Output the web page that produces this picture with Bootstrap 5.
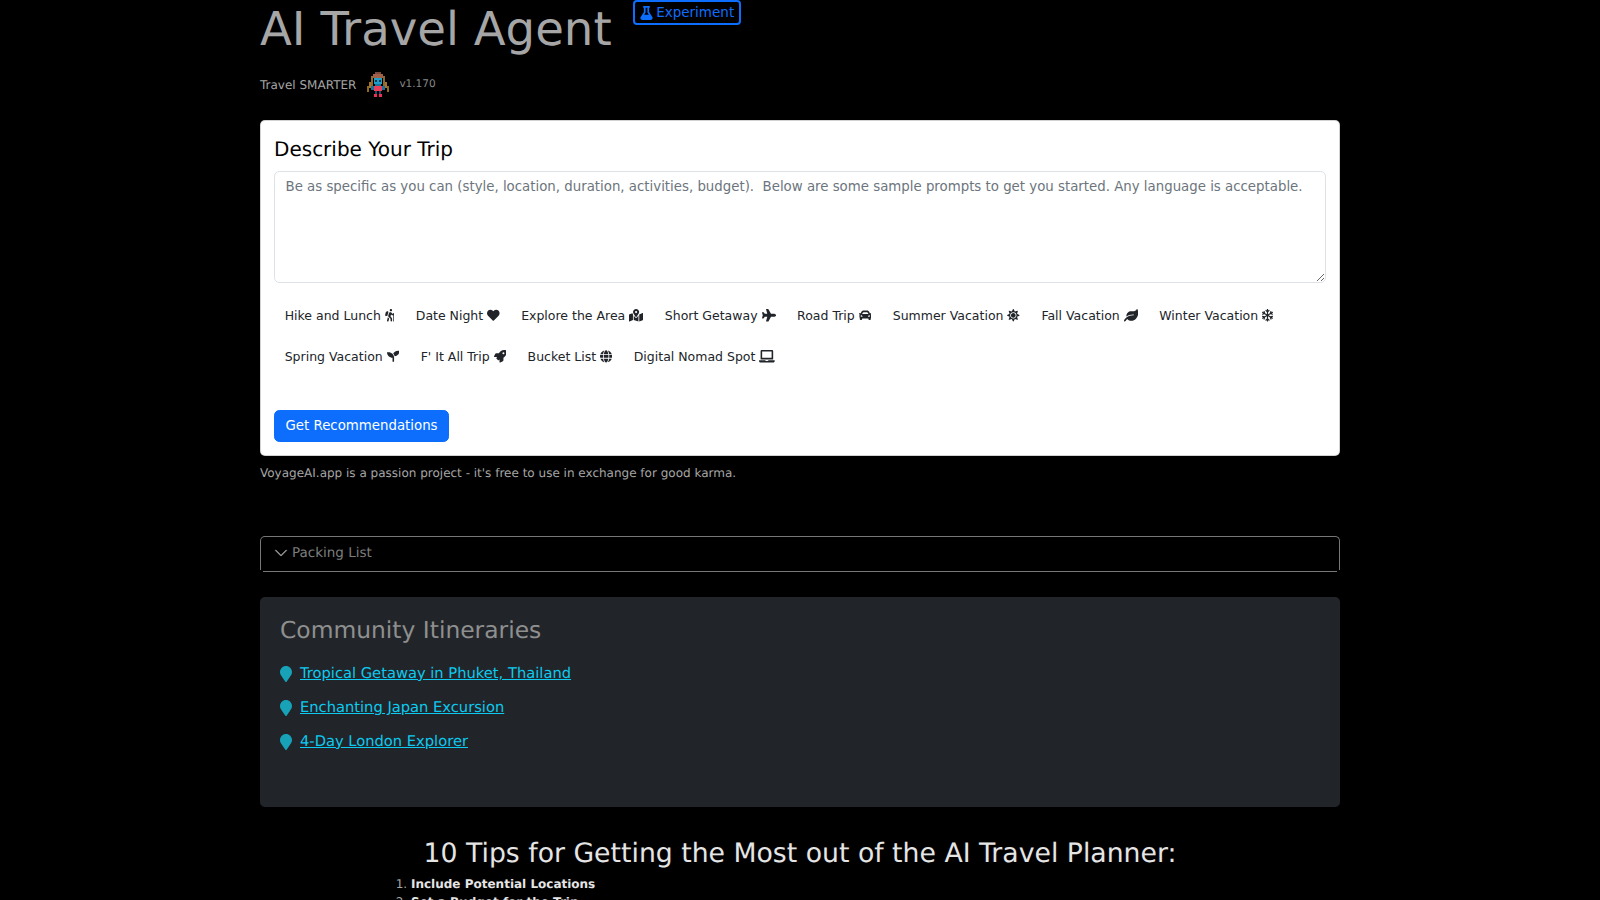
<!DOCTYPE html>
<html lang="en">
<head>
    <meta charset="UTF-8">
    <title>AI Travel Agent</title>
    <link href="https://cdn.jsdelivr.net/npm/bootstrap@5.3.3/dist/css/bootstrap.min.css" rel="stylesheet">
    <style>
        html { font-size: 14px; }
        body { background: #000; color: #adb5bd; font-family: "DejaVu Sans", sans-serif; height: 900px; overflow: hidden; text-rendering: geometricPrecision; }
        .page-wrap { width: 1080px; margin: 0 auto; }
        .app-title { font-size: 46.6px; font-weight: 400; color: #a6a6a6; line-height: 58px; margin: 0; }
        .exp-btn { font-size: 13.5px; color: #0d6efd; border: 2px solid #0d6efd; border-radius: 4px; padding: 0 5px; line-height: 21px; margin-left: 21px; align-self: flex-start; background: none; }
        .exp-btn svg { height: 14px; width: 13px; fill: currentColor; }
        .tagline { font-size: 12px; margin-top: 13px; height: 27px; color: #a6a6a6; }
        .version { font-size: 10.5px; color: #888; }
        .avatar-mark { margin: 0 10px 0 11px; }
        .trip-card { margin-top: 22px; padding: 14px 13px 13px; border-radius: 5px; }
        .trip-card h5 { font-size: 20px; font-weight: 400; color: #000; margin-bottom: 8px; line-height: 27px; margin-top: 1px; }
        .trip-input { height: 112px; font-size: 13.33px; color: #212529; }
        .trip-input::placeholder { color: #6c757d; }
        .prompt-row { margin-top: 14px; row-gap: 3px; min-height: 91px; }
        .prompt-btn { font-size: 12.5px; color: #212529; border: 0; background: none; padding: 9px 10.7px; line-height: 20px; white-space: nowrap; }
        .prompt-btn svg { height: 12.6px; fill: currentColor; vertical-align: -2px; }
        .go-btn { margin-top: 22px; font-size: 13.33px; padding: 5px 10.5px; }
        .footnote { font-size: 12px; color: #a6a6a6; margin: 8px 0 0; }
        .pack-box { margin-top: 54px; height: 34px; border: 1px solid #777; border-bottom: 0; border-radius: 5px 5px 0 0; background: #000; color: #7d7d7d; padding: 0 13px; font-size: 13.5px; }
        .pack-box svg { width: 14px; height: 14px; fill: #9a9a9a; margin-right: 4px; }
        .pack-rule { height: 1px; margin: 1px 3px 0; background: #777; }
        .community { margin-top: 25px; height: 210px; background: #212529; border-radius: 5px; padding: 19px 20px; }
        .community h3 { font-size: 23.4px; color: #8f8f8f; font-weight: 400; margin-bottom: 13px; line-height: 28px; }
        .spot { height: 34px; font-size: 14.7px; }
        .spot svg { width: 12px; height: 16px; fill: #17a2b8; margin-right: 8px; flex: none; }
        .spot a { color: #0dcaf0; }
        .tips-title { font-size: 26.7px; font-weight: 400; color: #e5e5e5; text-align: center; margin: 31px 0 0; }
        .tips-list { width: 810px; margin: 5px auto 0; padding-left: 16px; font-size: 12px; color: #e5e5e5; }
        .tips-list li::marker { color: #a6a6a6; font-weight: 400; }
        .tips-list li { font-weight: 700; }
    </style>
</head>
<body>
<div class="page-wrap">
    <!-- Header -->
    <div class="d-flex">
        <h1 class="app-title">AI Travel Agent</h1>
        <button class="exp-btn d-flex align-items-center gap-1">
            <svg viewBox="0 0 448 512"><path d="M437.200 403.500L320 215V64h8c13.300 0 24-10.700 24-24V24c0-13.300-10.700-24-24-24H120c-13.300 0-24 10.700-24 24v16c0 13.300 10.700 24 24 24h8v151L10.800 403.500C-18.500 450.600 15.300 512 70.900 512h306.200c55.700 0 89.400-61.500 60.100-108.500zM137.900 320l48.200-77.600c3.700-5.200 5.800-11.600 5.800-18.400V64h64v160c0 6.900 2.200 13.200 5.800 18.400l48.200 77.600h-172z"/></svg>
            Experiment
        </button>
    </div>
    <div class="tagline d-flex align-items-center">
        <span>Travel SMARTER</span>
        <svg class="avatar-mark" width="22" height="26" viewBox="0 0 22 26">
            <rect x="8" y="0" width="6" height="2" fill="#7a4a3c"/>
            <rect x="6" y="2" width="10" height="4" fill="#a0604a"/>
            <rect x="4" y="4" width="2" height="10" fill="#8a6a30"/>
            <rect x="16" y="4" width="2" height="10" fill="#8a6a30"/>
            <rect x="2" y="10" width="2" height="6" fill="#a8742c"/>
            <rect x="18" y="10" width="2" height="6" fill="#a8742c"/>
            <rect x="0" y="14" width="2" height="6" fill="#8a6a20"/>
            <rect x="20" y="14" width="2" height="6" fill="#8a6a20"/>
            <rect x="7" y="6" width="8" height="6" fill="#1f9ec9"/>
            <rect x="8" y="8" width="2" height="2" fill="#0a3a50"/>
            <rect x="12" y="8" width="2" height="2" fill="#0a3a50"/>
            <rect x="8" y="12" width="6" height="2" fill="#16739a"/>
            <rect x="7" y="14" width="8" height="5" fill="#e8405a"/>
            <rect x="4" y="14" width="3" height="4" fill="#1f6f9c"/>
            <rect x="15" y="14" width="3" height="4" fill="#1f6f9c"/>
            <rect x="8" y="19" width="2" height="3" fill="#234a6a"/>
            <rect x="12" y="19" width="2" height="3" fill="#234a6a"/>
            <rect x="7" y="22" width="3" height="3" fill="#e8305a"/>
            <rect x="12" y="22" width="3" height="3" fill="#e8305a"/>
        </svg>
        <span class="version">v1.170</span>
    </div>

    <!-- Trip form -->
    <div class="card trip-card">
        <h5>Describe Your Trip</h5>
        <textarea class="form-control trip-input" placeholder="Be as specific as you can (style, location, duration, activities, budget).  Below are some sample prompts to get you started. Any language is acceptable."></textarea>
        <div class="d-flex flex-wrap prompt-row align-content-start">
            <button class="prompt-btn">Hike and Lunch <svg width="9.500" viewBox="0 0 384 512"><path d="M80.950 472.230c-4.280 17.160 6.140 34.530 23.280 38.810 2.610.66 5.220.95 7.800.95 14.330 0 27.370-9.700 31.020-24.230l25.240-100.970-52.780-52.780-34.560 138.220zm14.890-196.120L137 117c2.190-8.420-3.140-16.950-11.920-19.060-43.880-10.520-88.350 15.070-99.320 57.170L.49 253.240c-2.190 8.420 3.140 16.950 11.920 19.060l63.560 15.250c8.790 2.100 17.680-3.020 19.870-11.440zM368 160h-16c-8.840 0-16 7.160-16 16v16h-34.750l-46.780-46.780C243.380 134.110 228.610 128 212.910 128c-27.020 0-50.470 18.300-57.030 44.520l-26.920 107.720a32.012 32.012 0 0 0 8.420 30.390L224 397.250V480c0 17.670 14.330 32 32 32s32-14.330 32-32v-82.750c0-17.090-6.660-33.160-18.750-45.250l-46.820-46.820c.15-.5.49-.89.62-1.410l19.890-79.570 22.430 22.430c6.050 6.050 14.080 9.380 22.620 9.380h48v240c0 8.840 7.160 16 16 16h16c8.840 0 16-7.160 16-16V176c.01-8.840-7.150-16-16-16zM240 96c26.510 0 48-21.490 48-48S266.510 0 240 0s-48 21.490-48 48 21.490 48 48 48z"/></svg></button>
            <button class="prompt-btn">Date Night <svg width="12.600" viewBox="0 0 512 512"><path d="M462.300 62.600C407.500 15.900 326 24.300 275.700 76.200L256 96.500l-19.700-20.300C186.100 24.300 104.500 15.900 49.700 62.600c-62.800 53.600-66.100 149.800-9.900 207.900l193.500 199.800c12.500 12.900 32.800 12.900 45.300 0l193.500-199.800c56.300-58.100 53-154.300-9.800-207.900z"/></svg></button>
            <button class="prompt-btn">Explore the Area <svg width="14.200" viewBox="0 0 576 512"><path d="M288 0c-69.590 0-126 56.410-126 126 0 56.260 82.350 158.800 113.900 196.020 6.390 7.540 17.820 7.540 24.200 0C331.650 284.800 414 182.260 414 126 414 56.410 357.590 0 288 0zm0 168c-23.200 0-42-18.800-42-42s18.800-42 42-42 42 18.800 42 42-18.800 42-42 42zM20.120 215.950A32.006 32.006 0 0 0 0 245.660v250.320c0 11.320 11.430 19.060 21.940 14.860L160 448V214.920c-8.840-15.980-16.070-31.540-21.250-46.420L20.120 215.950zM288 359.670c-14.070 0-27.380-6.180-36.510-16.960-19.660-23.200-40.570-49.620-59.490-76.720V448l192 64V266c-18.920 27.090-39.820 53.520-59.490 76.720-9.130 10.770-22.440 16.950-36.510 16.950zm266.060-198.510L416 224v288l139.880-55.950A31.996 31.996 0 0 0 576 426.340V176.020c0-11.320-11.430-19.060-21.940-14.860z"/></svg></button>
            <button class="prompt-btn">Short Getaway <svg width="14.200" viewBox="0 0 576 512"><path d="M480 192H365.710L260.610 8.060A16.014 16.014 0 0 0 246.710 0h-65.500c-10.630 0-18.300 10.170-15.380 20.390L214.860 192H112l-43.200-57.600c-3.020-4.030-7.770-6.400-12.800-6.400H16.010C5.600 128-2.040 137.780.49 147.880L32 256 .49 364.120C-2.040 374.220 5.600 384 16.010 384H56c5.040 0 9.780-2.370 12.800-6.400L112 320h102.860l-49.030 171.600c-2.920 10.220 4.750 20.400 15.380 20.400h65.500c5.740 0 11.040-3.080 13.890-8.060L365.710 320H480c35.350 0 96-28.650 96-64s-60.650-64-96-64z"/></svg></button>
            <button class="prompt-btn">Road Trip <svg width="12.600" viewBox="0 0 512 512"><path d="M499.990 176h-59.870l-16.640-41.600C406.380 91.630 365.570 64 319.500 64h-127c-46.060 0-86.880 27.630-103.990 70.400L71.870 176H12.010C4.200 176-1.530 183.340.37 190.910l6 24C7.700 220.250 12.500 224 18.010 224h20.070C24.650 235.730 16 252.780 16 272v48c0 16.120 6.160 30.670 16 41.930V416c0 17.670 14.330 32 32 32h32c17.670 0 32-14.330 32-32v-32h256v32c0 17.670 14.330 32 32 32h32c17.670 0 32-14.330 32-32v-54.070c9.840-11.250 16-25.800 16-41.930v-48c0-19.220-8.650-36.270-22.070-48H494c5.510 0 10.310-3.750 11.640-9.090l6-24c1.890-7.570-3.840-14.910-11.650-14.910zm-352.060-17.830c7.290-18.220 24.940-30.170 44.570-30.170h127c19.630 0 37.280 11.950 44.570 30.170L384 208H128l19.930-49.830zM96 319.800c-19.200 0-32-12.760-32-31.900S76.800 256 96 256s48 28.710 48 47.850-28.800 15.950-48 15.950zm320 0c-19.200 0-48 3.190-48-15.950S396.800 256 416 256s32 12.760 32 31.900-12.800 31.900-32 31.900z"/></svg></button>
            <button class="prompt-btn">Summer Vacation <svg width="12.600" viewBox="0 0 512 512"><path d="M256 160c-52.900 0-96 43.100-96 96s43.100 96 96 96 96-43.100 96-96-43.100-96-96-96zm246.400 80.500l-94.700-47.300 33.500-100.400c4.500-13.600-8.400-26.500-21.900-21.900l-100.400 33.500-47.400-94.800c-6.400-12.800-24.600-12.800-31 0l-47.300 94.700L92.700 70.800c-13.600-4.500-26.500 8.400-21.900 21.900l33.500 100.400-94.700 47.400c-12.800 6.400-12.800 24.600 0 31l94.700 47.300-33.500 100.500c-4.500 13.600 8.400 26.500 21.900 21.900l100.400-33.500 47.300 94.700c6.400 12.800 24.600 12.800 31 0l47.300-94.700 100.400 33.500c13.600 4.500 26.500-8.400 21.900-21.900l-33.500-100.400 94.700-47.300c13-6.500 13-24.700.2-31.100zm-155.900 106c-49.900 49.900-131.100 49.900-181 0-49.900-49.900-49.900-131.100 0-181 49.900-49.900 131.100-49.900 181 0 49.900 49.900 49.900 131.100 0 181z"/></svg></button>
            <button class="prompt-btn">Fall Vacation <svg width="14.200" viewBox="0 0 576 512"><path d="M546.200 9.700c-5.600-12.500-21.600-13-28.300-1.200C486.900 62.400 431.400 96 368 96h-80C182 96 96 182 96 288c0 7 .8 13.700 1.500 20.500C161.300 262.800 253.400 224 384 224c8.800 0 16 7.200 16 16s-7.200 16-16 16C132.600 256 26 410.100 2.400 468c-6.600 16.300 1.200 34.900 17.500 41.600 16.400 6.800 35-1.100 41.800-17.300 1.500-3.600 20.900-47.900 71.900-90.600 32.400 43.900 94 85.800 174.900 77.200C465.500 467.500 576 326.700 576 154.300c0-50.200-10.800-102.200-29.800-144.600z"/></svg></button>
            <button class="prompt-btn">Winter Vacation <svg width="11" viewBox="0 0 448 512"><path d="M440.100 355.200l-39.200-23 34.100-9.300c8.400-2.300 13.400-11.100 11.100-19.600l-4.100-15.500c-2.200-8.500-10.900-13.600-19.300-11.300L343 298.200 271.200 256l71.900-42.200 79.700 21.700c8.400 2.300 17-2.800 19.300-11.300l4.100-15.500c2.200-8.500-2.700-17.300-11.100-19.600l-34.100-9.300 39.200-23c7.500-4.400 10.100-14.200 5.800-21.900l-7.900-13.900c-4.300-7.700-14-10.300-21.500-5.900l-39.200 23 9.100-34.700c2.200-8.500-2.700-17.300-11.100-19.600l-15.200-4.100c-8.400-2.300-17 2.800-19.300 11.300l-21.300 81-71.900 42.200v-84.500L306 70.400c6.100-6.200 6.100-16.400 0-22.600l-11.100-11.300c-6.100-6.200-16.100-6.200-22.200 0l-24.900 25.400V16c0-8.800-7-16-15.700-16h-15.700c-8.700 0-15.700 7.200-15.700 16v46.100l-24.900-25.400c-6.100-6.200-16.100-6.200-22.200 0L142.100 48c-6.100 6.200-6.100 16.400 0 22.600l58.300 59.300v84.500l-71.900-42.200-21.300-81c-2.200-8.500-10.900-13.600-19.300-11.300L72.700 84c-8.400 2.300-13.400 11.100-11.100 19.600l9.100 34.700-39.200-23c-7.500-4.400-17.100-1.800-21.500 5.900l-7.900 13.900c-4.300 7.700-1.800 17.500 5.800 21.900l39.200 23-34.100 9.100c-8.400 2.300-13.400 11.100-11.100 19.600L6 224.200c2.200 8.500 10.900 13.600 19.300 11.300l79.700-21.700 71.900 42.200-71.900 42.200-79.700-21.700c-8.400-2.300-17 2.800-19.300 11.300l-4.100 15.500c-2.200 8.500 2.700 17.300 11.100 19.600l34.100 9.300-39.200 23c-7.500 4.400-10.100 14.200-5.800 21.900L10 391c4.300 7.700 14 10.300 21.500 5.900l39.200-23-9.100 34.700c-2.200 8.500 2.700 17.300 11.100 19.600l15.200 4.100c8.400 2.300 17-2.800 19.300-11.300l21.300-81 71.900-42.200v84.500l-58.300 59.300c-6.100 6.200-6.100 16.400 0 22.600l11.100 11.300c6.100 6.200 16.100 6.200 22.200 0l24.900-25.400V496c0 8.800 7 16 15.700 16h15.700c8.700 0 15.700-7.200 15.700-16v-46.100l24.900 25.400c6.100 6.200 16.100 6.200 22.200 0l11.100-11.300c6.100-6.200 6.100-16.400 0-22.600l-58.300-59.300v-84.500l71.900 42.200 21.300 81c2.200 8.500 10.900 13.600 19.300 11.300L375 428c8.400-2.300 13.400-11.100 11.100-19.600l-9.100-34.700 39.200 23c7.500 4.400 17.100 1.800 21.500-5.900l7.900-13.900c4.600-7.500 2.100-17.300-5.500-21.700z"/></svg></button>
            <button class="prompt-btn">Spring Vacation <svg width="12.600" viewBox="0 0 512 512"><path d="M64 96H0c0 123.700 100.300 224 224 224v144c0 8.800 7.200 16 16 16h32c8.800 0 16-7.200 16-16V320C288 196.300 187.700 96 64 96zm384-64c-84.200 0-157.400 46.500-195.700 115.200 27.700 30.200 48.200 66.900 59 107.600C424 243.100 512 147.900 512 32h-64z"/></svg></button>
            <button class="prompt-btn">F' It All Trip <svg width="12.600" viewBox="0 0 512 512"><path d="M505.120 19.090c-1.190-5.530-6.660-11-12.210-12.190C460.720 0 435.510 0 410.410 0 307.180 0 245.270 55.200 199.050 128H94.840c-16.350.02-35.560 11.880-42.890 26.480L2.520 253.300A28.400 28.400 0 0 0 0 264a24 24 0 0 0 24 24h103.810l-22.470 22.470c-11.370 11.360-13 32.260 0 45.250l50.900 50.910c11.160 11.190 32.160 13.160 45.280 0l22.470-22.470V488a24 24 0 0 0 24 24 28.560 28.560 0 0 0 10.710-2.520l98.730-49.390c14.630-7.300 26.510-26.500 26.510-42.860V312.800c72.600-46.310 128.030-108.410 128.030-211.100.01-25.200.01-50.400-6.950-82.610zM384.040 168a40 40 0 1 1 40.010-40 40.020 40.020 0 0 1-40.010 40z"/></svg></button>
            <button class="prompt-btn">Bucket List <svg width="12.200" viewBox="0 0 496 512"><path d="M336.500 160C322 70.700 287.800 8 248 8s-74 62.700-88.500 152h177zM152 256c0 22.200 1.200 43.500 3.300 64h185.300c2.100-20.500 3.300-41.800 3.300-64s-1.200-43.500-3.300-64H155.300c-2.100 20.500-3.300 41.800-3.300 64zm324.700-96c-28.600-67.900-86.500-120.400-158-141.600 24.400 33.800 41.200 84.700 50 141.600h108zM177.200 18.400C105.800 39.600 47.800 92.100 19.300 160h108c8.700-56.900 25.500-107.800 49.900-141.600zM487.400 192H372.700c2.100 21 3.300 42.500 3.300 64s-1.200 43-3.300 64h114.600c5.500-20.500 8.600-41.800 8.600-64s-3.100-43.500-8.500-64zM120 256c0-21.500 1.200-43 3.300-64H8.600C3.200 212.500 0 233.800 0 256s3.200 43.500 8.600 64h114.600c-2-21-3.200-42.500-3.200-64zm39.500 96c14.500 89.300 48.700 152 88.500 152s74-62.700 88.500-152h-177zm159.300 141.600c71.400-21.200 129.400-73.700 158-141.600h-108c-8.800 56.900-25.600 107.800-50 141.600zM19.300 352c28.600 67.900 86.500 120.400 158 141.600-24.400-33.800-41.200-84.700-50-141.600h-108z"/></svg></button>
            <button class="prompt-btn">Digital Nomad Spot <svg width="15.750" viewBox="0 0 640 512"><path d="M624 416H381.540c-.74 19.810-14.710 32-32.740 32H288c-18.690 0-33.020-17.470-32.770-32H16c-8.800 0-16 7.200-16 16v16c0 35.200 28.800 64 64 64h512c35.200 0 64-28.800 64-64v-16c0-8.800-7.200-16-16-16zM576 48c0-26.400-21.600-48-48-48H112C85.600 0 64 21.600 64 48v336h512V48zm-64 272H128V64h384v256z"/></svg></button>
        </div>
        <div><button class="btn btn-primary go-btn">Get Recommendations</button></div>
    </div>
    <p class="footnote">VoyageAI.app is a passion project - it's free to use in exchange for good karma.</p>

    <!-- Packing list -->
    <div class="pack-box d-flex align-items-center">
        <svg viewBox="0 0 16 16"><path fill-rule="evenodd" stroke="#9a9a9a" stroke-width=".6" d="M1.646 4.646a.5.5 0 0 1 .708 0L8 10.293l5.646-5.647a.5.5 0 0 1 .708.708l-6 6a.5.5 0 0 1-.708 0l-6-6a.5.5 0 0 1 0-.708z"/></svg>
        Packing List
    </div>
    <div class="pack-rule"></div>

    <!-- Community -->
    <div class="community">
        <h3>Community Itineraries</h3>
        <div class="spot d-flex align-items-center"><svg viewBox="0 0 384 512"><path d="M172.268 501.670C26.970 291.031 0 269.413 0 192 0 85.961 85.961 0 192 0s192 85.961 192 192c0 77.413-26.970 99.031-172.268 309.670-9.535 13.774-29.930 13.773-39.464 0z"/></svg><a href="#">Tropical Getaway in Phuket, Thailand</a></div>
        <div class="spot d-flex align-items-center"><svg viewBox="0 0 384 512"><path d="M172.268 501.670C26.970 291.031 0 269.413 0 192 0 85.961 85.961 0 192 0s192 85.961 192 192c0 77.413-26.970 99.031-172.268 309.670-9.535 13.774-29.930 13.773-39.464 0z"/></svg><a href="#">Enchanting Japan Excursion</a></div>
        <div class="spot d-flex align-items-center"><svg viewBox="0 0 384 512"><path d="M172.268 501.670C26.970 291.031 0 269.413 0 192 0 85.961 85.961 0 192 0s192 85.961 192 192c0 77.413-26.970 99.031-172.268 309.670-9.535 13.774-29.930 13.773-39.464 0z"/></svg><a href="#">4-Day London Explorer</a></div>
    </div>

    <h2 class="tips-title">10 Tips for Getting the Most out of the AI Travel Planner:</h2>
    <ol class="tips-list">
        <li>Include Potential Locations</li>
        <li>Set a Budget for the Trip</li>
    </ol>
</div>
<script src="https://cdn.jsdelivr.net/npm/bootstrap@5.3.3/dist/js/bootstrap.bundle.min.js"></script>
</body>
</html>
